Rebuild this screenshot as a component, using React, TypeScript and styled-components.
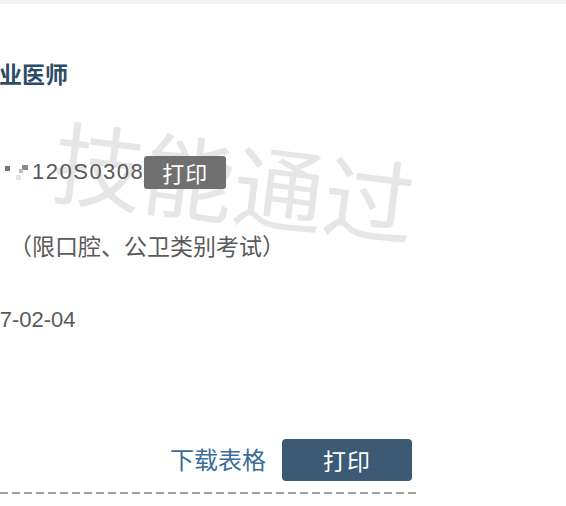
import styled, { createGlobalStyle } from "styled-components";

const GlobalStyle = createGlobalStyle`
  html, body {
    margin: 0;
    padding: 0;
    background: #ffffff;
    overflow: hidden;
  }
  body {
    font-family: "Liberation Sans", "Noto Sans CJK SC", sans-serif;
  }
`;

const Page = styled.div`
  position: relative;
  width: 566px;
  height: 506px;
  overflow: hidden;
  background: #ffffff;
`;

const TopBar = styled.div`
  height: 4px;
  background: #f1f1f1;
`;

const Sheet = styled.div`
  position: relative;
  z-index: 1;
  display: flex;
  flex-direction: column;
  width: 418px;
`;

const Row = styled.div<{ $top: number; $indent?: number }>`
  display: flex;
  align-items: center;
  height: 34px;
  margin-top: ${(p) => p.$top}px;
  margin-left: ${(p) => p.$indent ?? 0}px;
  white-space: nowrap;
`;

const Title = styled.span`
  font-family: "Noto Sans CJK SC", sans-serif;
  font-size: 23px;
  font-weight: 700;
  color: #2e4b65;
`;

const Value = styled.span<{ $spacing?: number; $cjk?: boolean }>`
  font-family: ${(p) =>
    p.$cjk ? '"Noto Sans CJK SC", sans-serif' : '"Liberation Sans", sans-serif'};
  font-size: ${(p) => (p.$cjk ? 23 : 22)}px;
  color: #5a5a5a;
  letter-spacing: ${(p) => p.$spacing ?? 0}px;
`;

const Mask = styled.svg`
  display: block;
  margin-right: 2px;
`;

const SmallButton = styled.button`
  height: 33px;
  padding: 0 18px;
  border: none;
  border-radius: 3px;
  background: #707070;
  color: #ffffff;
  font-family: "Noto Sans CJK SC", sans-serif;
  font-size: 22px;
  letter-spacing: 1px;
  line-height: 33px;
`;

const Footer = styled.div`
  display: flex;
  align-items: center;
  justify-content: flex-end;
  gap: 16px;
  width: 412px;
  height: 42px;
  margin-top: 102px;
`;

const DownloadLink = styled.a`
  font-family: "Noto Sans CJK SC", sans-serif;
  font-size: 24px;
  color: #3b6d98;
  text-decoration: none;
  margin-top: -4px;
`;

const PrintButton = styled.button`
  width: 130px;
  height: 42px;
  border: none;
  border-radius: 4px;
  background: #3d5a75;
  color: #ffffff;
  font-family: "Noto Sans CJK SC", sans-serif;
  font-size: 23px;
  letter-spacing: 1px;
`;

const Dashed = styled.div`
  height: 2px;
  margin-top: 11px;
  background: repeating-linear-gradient(
    to right,
    #a0a0a0 0,
    #a0a0a0 8px,
    transparent 8px,
    transparent 12px
  );
`;

const Watermark = styled.div`
  position: absolute;
  left: 54px;
  top: 90px;
  z-index: 0;
  font-family: "Noto Sans CJK SC", sans-serif;
  font-size: 91px;
  font-weight: 400;
  color: #e6e6e6;
  white-space: nowrap;
  transform: rotate(7deg);
  transform-origin: left center;
  pointer-events: none;
`;

function MaskedDigits() {
  return (
    <Mask width="30" height="22" viewBox="0 0 30 22">
      <rect x="5" y="5" width="5" height="5" fill="#777" />
      <rect x="22" y="4" width="6" height="5" fill="#8a8a8a" />
      <rect x="19" y="8" width="4" height="4" fill="#bdbdbd" />
      <rect x="16" y="14" width="5" height="5" fill="#e4e4e4" />
    </Mask>
  );
}

export default function App() {
  return (
    <>
      <GlobalStyle />
      <Page>
        <TopBar />
        <Watermark>技能通过</Watermark>
        <Sheet>
          <Row $top={52} $indent={-24}>
            <Title>执业医师</Title>
          </Row>
          <Row $top={65}>
            <MaskedDigits />
            <Value $spacing={1.5}>120S0308</Value>
            <SmallButton>打印</SmallButton>
          </Row>
          <Row $top={39} $indent={9}>
            <Value $cjk>（限口腔、公卫类别考试）</Value>
          </Row>
          <Row $top={41} $indent={-37}>
            <Value>2017-02-04</Value>
          </Row>
          <Footer>
            <DownloadLink href="#">下载表格</DownloadLink>
            <PrintButton>打印</PrintButton>
          </Footer>
          <Dashed />
        </Sheet>
      </Page>
    </>
  );
}
